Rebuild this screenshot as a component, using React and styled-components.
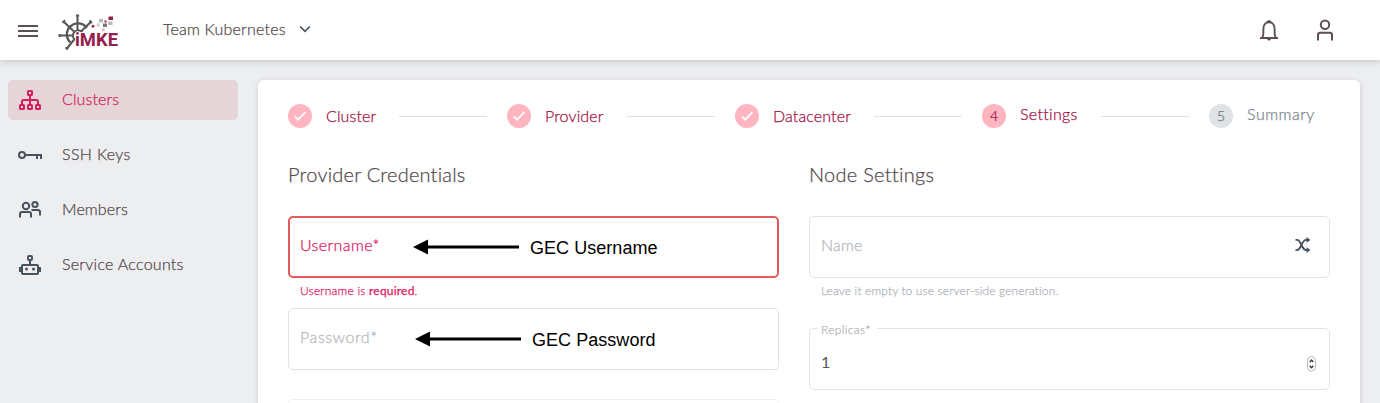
import React from "react";
import styled, { createGlobalStyle } from "styled-components";

const GlobalStyle = createGlobalStyle`
  * { box-sizing: border-box; }
  body {
    margin: 0;
    height: 403px;
    overflow: hidden;
    background: #edeef0;
    color: #54494e;
    font-family: Lato, "Liberation Sans", sans-serif;
    font-size: 16px;
    font-weight: 300;
    font-variant-ligatures: none;
    line-height: 20px;
    -webkit-font-smoothing: antialiased;
    -webkit-text-stroke: 0.25px currentColor;
  }
`;

const Text = styled.span`
  display: block;
  white-space: nowrap;
  letter-spacing: ${(p) => p.$track || 0}px;
`;

const Page = styled.div`
  display: flex;
  flex-direction: column;
  height: 403px;
  overflow: hidden;
`;

const Header = styled.header`
  flex: none;
  display: flex;
  align-items: center;
  height: 60px;
  padding: 0 44px 0 17px;
  background: #fff;
  box-shadow: 0 1px 7px rgba(60, 65, 75, 0.28);
  z-index: 1;
`;

const MenuIcon = styled.svg`
  flex: none;
  width: 22px;
  height: 14px;
  margin-top: 2px;
`;

const Logo = styled.svg`
  flex: none;
  width: 64px;
  height: 40px;
  margin: 5px 0 0 18px;
`;

const TeamPicker = styled.div`
  display: flex;
  align-items: center;
  gap: 12px;
  flex: 1;
  margin-left: 42px;
`;

const TeamName = styled(Text)`
  width: 123px;
  padding-bottom: 2px;
`;

const HeaderIcons = styled.div`
  display: flex;
  align-items: center;
  gap: 35px;
`;

const Body = styled.div`
  flex: 1;
  min-height: 0;
  display: flex;
  gap: 20px;
  padding: 20px 20px 0 8px;
`;

const Sidebar = styled.nav`
  flex: none;
  width: 230px;
  display: flex;
  flex-direction: column;
  gap: 15px;
`;

const NavItem = styled.a`
  display: flex;
  align-items: center;
  gap: 20px;
  height: 40px;
  padding-left: 10px;
  border-radius: 5px;
  background: ${(p) => (p.$active ? "#e5d5d8" : "transparent")};
  color: ${(p) => (p.$active ? "#d41f5c" : "#54494e")};

  svg {
    color: ${(p) => (p.$active ? "#d41f5c" : "#47525d")};
  }

  span {
    padding-bottom: 2px;
  }
`;

const Card = styled.main`
  flex: 1;
  height: 400px;
  padding: 24px 30px 0;
  background: #fff;
  border-radius: 6px;
  box-shadow: 0 1px 5px rgba(60, 65, 75, 0.2);
`;

const Stepper = styled.div`
  display: flex;
  align-items: center;
  height: 24px;
`;

const StepCircle = styled.div`
  flex: none;
  display: flex;
  align-items: center;
  justify-content: center;
  width: 24px;
  height: 24px;
  margin-right: 14px;
  border-radius: 50%;
  font-size: 14px;
  background: ${(p) => (p.$pending ? "#dfe3e6" : "#ffb5bf")};
  color: ${(p) => (p.$pending ? "#6b747c" : "#9c1044")};
`;

const StepLabel = styled(Text)`
  flex: none;
  width: ${(p) => p.$width}px;
  padding-bottom: ${(p) => (p.$raised ? 4 : 0)}px;
  color: ${(p) => (p.$pending ? "#7a838b" : "#a00f43")};
`;

const StepLine = styled.div`
  flex: none;
  width: 88px;
  height: 1px;
  margin-right: 20px;
  background: #dee1e4;
`;

const Columns = styled.div`
  display: grid;
  grid-template-columns: 491px 521px;
  gap: 30px;
  margin-top: 34px;
`;

const Column = styled.section`
  display: flex;
  flex-direction: column;
`;

const Title = styled.h2`
  margin: 0 0 30px;
  font-size: 20px;
  font-weight: 300;
  line-height: 24px;
  letter-spacing: ${(p) => p.$track || 0}px;
`;

const Field = styled.div`
  position: relative;
  flex: none;
  display: flex;
  align-items: center;
  justify-content: space-between;
  height: 62px;
  padding: 0 ${(p) => p.$end || 12}px 4px ${(p) => (p.$error ? 10 : 11)}px;
  border: ${(p) => (p.$error ? "2px solid #e55a5a" : "1px solid #e0e3e5")};
  ${(p) => p.$disabled && "border-color: #efefef;"}
  border-radius: 5px;
  color: ${(p) => (p.$error ? "#e0175f" : "#b3b5bc")};
`;

const Value = styled(Text)`
  padding-top: 10px;
  color: #5d5458;
  font-weight: 400;
  -webkit-text-stroke: 0;
`;

const FloatingLabel = styled(Text)`
  position: absolute;
  left: 7px;
  top: -9px;
  width: 60px;
  padding-left: 4px;
  background: #fff;
  font-size: 12px;
`;

const Hint = styled(Text)`
  height: ${(p) => p.$height}px;
  padding: 3px 0 0 12px;
  font-size: 12px;
  color: ${(p) => (p.$error ? "#e0175f" : "#b3b5bc")};
`;

const Spacer = styled.div`
  flex: none;
  height: 29px;
`;

const Note = styled.div`
  position: absolute;
  top: ${(p) => p.$top}px;
  left: ${(p) => p.$left}px;
  display: flex;
  align-items: center;
  gap: 11px;
  color: #000;
  font-family: "Liberation Sans", sans-serif;
  font-size: 18px;
  font-weight: 400;
  -webkit-text-stroke: 0;

  svg { flex: none; }
  span { padding-top: 2px; letter-spacing: 0.04px; }
`;

const Spinner = styled.svg`
  margin-top: 13px;
`;

const Chevron = () => (
  <svg width="14" height="10" viewBox="0 0 14 10" fill="none" stroke="#47525d" strokeWidth="1.6">
    <path d="M2.2 1.500 7 6.300 11.800 1.500" />
  </svg>
);

const Bell = () => (
  <svg width="20" height="22" viewBox="0 0 20 22" fill="none" stroke="#5d5055" strokeWidth="1.9">
    <path d="M1 19h18M3.500 18.500c1-2 .9-5 .9-8.500C4.400 6 6.500 3.200 10 3.200s5.600 2.800 5.600 6.800c0 3.500-.1 6.500.9 8.500" />
    <path d="M7.500 3C8 .8 12 .8 12.500 3zM8 19.800c.5 2.400 3.500 2.400 4 0z" fill="#5d5055" stroke="none" />
  </svg>
);

const User = () => (
  <svg width="22" height="22" viewBox="0 0 22 22" fill="none" stroke="#5d5055" strokeWidth="2">
    <circle cx="11" cy="5.800" r="4.200" />
    <path d="M4 21.500v-5.500q0-2.200 2.200-2.200h9.600q2.200 0 2.200 2.200v5.500" />
  </svg>
);

const NavSvg = ({ children }) => (
  <svg width="24" height="24" viewBox="0 0 24 24" fill="none" stroke="currentColor" strokeWidth="2">
    {children}
  </svg>
);

const ClusterIcon = () => (
  <NavSvg>
    <rect x="10" y="3" width="4" height="4" rx=".5" />
    <rect x="2" y="17" width="4" height="4" rx=".5" />
    <rect x="10" y="17" width="4" height="4" rx=".5" />
    <rect x="18" y="17" width="4" height="4" rx=".5" />
    <path d="M12 7v10M4 17v-3.500q0-1.500 1.500-1.500h13q1.500 0 1.500 1.500V17" />
  </NavSvg>
);

const KeyIcon = () => (
  <NavSvg>
    <circle cx="4" cy="12" r="3" />
    <path d="M7 12h17M19 12v4M23 12v4" />
  </NavSvg>
);

const MembersIcon = () => (
  <NavSvg>
    <circle cx="8" cy="8" r="3.200" />
    <circle cx="17" cy="6.500" r="2.600" />
    <path d="M2 19.500V16q0-2 2-2h7q2 0 2 2v3.500M13.500 12H20q2 0 2 2v3.500" />
  </NavSvg>
);

const RobotIcon = () => (
  <NavSvg>
    <rect x="10" y="3" width="4" height="4" rx="1" />
    <path d="M12 7v5" />
    <rect x="4" y="12" width="16" height="9" rx="1" />
    <path d="M2.500 14v5M21.500 14v5" strokeWidth="3" />
    <circle cx="8.500" cy="16" r="1.500" fill="currentColor" stroke="none" />
    <circle cx="15.500" cy="16" r="1.500" fill="currentColor" stroke="none" />
  </NavSvg>
);

const Check = () => (
  <svg width="14" height="12" viewBox="0 0 14 12" fill="none" stroke="#fff" strokeWidth="1.800">
    <path d="M1.800 6.300 5.200 9.700 12.500 2" />
  </svg>
);

const Shuffle = () => (
  <svg width="16" height="16" viewBox="0 0 16 16" fill="none" stroke="#47525d" strokeWidth="1.900">
    <path d="M.5 2.900h1.600c3.900 0 4.600 10.200 9 10.200H12M.5 13.100h1.600c3.900 0 4.600-10.200 9-10.200H12" />
    <path d="M11.500 0 15.500 2.900 11.500 5.800zM11.500 10.200l4 2.900-4 2.900z" fill="#47525d" stroke="none" />
  </svg>
);

const Arrow = () => (
  <svg width="106" height="16" viewBox="0 0 106 16">
    <path d="M0 8 15 .500v15zM14 6.500h92v3H14z" />
  </svg>
);

const LogoMark = () => (
  <Logo viewBox="0 0 64 40">
    <g fill="none" stroke="#555654" strokeWidth="2">
      <path d="M29.800 15A11 11 0 1 0 13.200 29.300" strokeWidth="2.300" />
      <path d="M20.500 2v15M6.500 8.500 17 18.500M34 8.800 24.500 18M2 22.500h14M9.500 36 18 25.500" />
      <path d="M18.900 2.500h3.200M5.500 9.800 8 7.300M32.500 7.500l2.500 2.500M2.500 21v3M8.500 34.500l2.500 2" />
      <path d="M17 26a5 5 0 1 1 8.500-6.500" />
    </g>
    <rect x="51.500" y="3.500" width="4.500" height="3.500" fill="#96204c" />
    <rect x="42" y="6" width="4" height="3.500" fill="#b8babb" />
    <rect x="47.500" y="7.500" width="2" height="2" fill="#96204c" />
    <rect x="51" y="8.500" width="4.500" height="3.500" fill="#b8babb" />
    <rect x="46" y="10.500" width="4" height="3.500" fill="#77797a" />
    <rect x="39.500" y="10.500" width="3.500" height="3" fill="#d0d1d1" />
    <rect x="34.800" y="12" width="2.500" height="2.500" fill="#96204c" />
    <rect x="45" y="15.500" width="2.500" height="2" fill="#dfa9ae" />
    <text
      x="18"
      y="33"
      textLength="43"
      lengthAdjust="spacingAndGlyphs"
      fill="#96204c"
      stroke="#fff"
      strokeWidth="1.400"
      paintOrder="stroke"
      fontFamily="Roboto, sans-serif"
      fontWeight="700"
      fontSize="18.500"
    >
      iMKE
    </text>
  </Logo>
);

const navItems = [
  { label: "Clusters", icon: ClusterIcon, active: true, track: 0.12 },
  { label: "SSH Keys", icon: KeyIcon, track: 0.35 },
  { label: "Members", icon: MembersIcon, track: 0.12 },
  { label: "Service Accounts", icon: RobotIcon, track: 0.27 },
];

const steps = [
  { label: "Cluster", width: 73, track: 0.12, done: true },
  { label: "Provider", width: 82, track: 0.15, done: true },
  { label: "Datacenter", width: 101, track: 0.12, done: true },
  { label: "Settings", width: 81, track: 0.33 },
  { label: "Summary", width: 69, track: 0.5, pending: true },
];

export default function App() {
  return (
    <Page>
      <GlobalStyle />
      <Header>
        <MenuIcon viewBox="0 0 22 14">
          <path d="M1 2h20M1 7h20M1 12h20" stroke="#5d5055" strokeWidth="2" />
        </MenuIcon>
        <LogoMark />
        <TeamPicker>
          <TeamName $track={0.2}>Team Kubernetes</TeamName>
          <Chevron />
        </TeamPicker>
        <HeaderIcons>
          <Bell />
          <User />
        </HeaderIcons>
      </Header>
      <Body>
        <Sidebar>
          {navItems.map(({ label, icon: Icon, active, track }) => (
            <NavItem key={label} $active={active}>
              <Icon />
              <Text $track={track}>{label}</Text>
            </NavItem>
          ))}
        </Sidebar>
        <Card>
          <Stepper>
            {steps.map((s, i) => (
              <React.Fragment key={s.label}>
                {i > 0 && <StepLine />}
                <StepCircle $pending={s.pending}>{s.done ? <Check /> : i + 1}</StepCircle>
                <StepLabel $width={s.width} $track={s.track} $pending={s.pending} $raised={!s.done}>
                  {s.label}
                </StepLabel>
              </React.Fragment>
            ))}
          </Stepper>
          <Columns>
            <Column>
              <Title $track={0.21}>Provider Credentials</Title>
              <Field $error>
                <Text $track={0.4}>Username*</Text>
                <Note $top={18} $left={123}>
                  <Arrow />
                  <Text>GEC Username</Text>
                </Note>
              </Field>
              <Hint $error $height={30} $track={0.2}>
                Username is <b>required</b>.
              </Hint>
              <Field>
                <Text $track={0.6}>Password*</Text>
                <Note $top={19} $left={126}>
                  <Arrow />
                  <Text>GEC Password</Text>
                </Note>
              </Field>
              <Spacer />
              <Field $disabled />
            </Column>
            <Column>
              <Title $track={0.27}>Node Settings</Title>
              <Field $end={18}>
                <Text $track={0.2}>Name</Text>
                <Shuffle />
              </Field>
              <Hint $height={50} $track={0.13}>Leave it empty to use server-side generation.</Hint>
              <Field $end={13}>
                <FloatingLabel $track={0.35}>Replicas*</FloatingLabel>
                <Value>1</Value>
                <Spinner width="9" height="16" viewBox="0 0 9 16" fill="none">
                  <rect x=".5" y=".5" width="8" height="14.500" rx="4" stroke="#b9b9b9" />
                  <path d="M2.700 6 4.500 4 6.300 6M2.700 9.700l1.800 2 1.800-2" stroke="#333" strokeWidth="1.300" />
                </Spinner>
              </Field>
            </Column>
          </Columns>
        </Card>
      </Body>
    </Page>
  );
}
